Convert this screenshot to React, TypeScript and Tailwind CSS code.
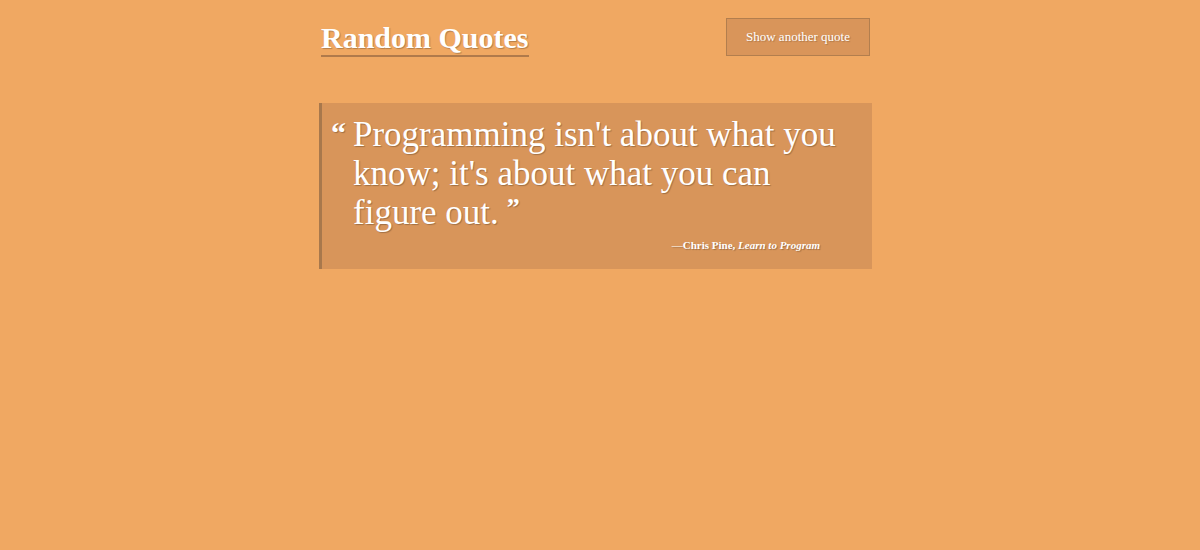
import { useState } from "react";

const QUOTES = [
  {
    text: "Programming isn't about what you know; it's about what you can figure out.",
    author: "Chris Pine",
    source: "Learn to Program",
  },
];

function App() {
  const [index, setIndex] = useState(0);
  const quote = QUOTES[index];

  return (
    <div className="min-h-[550px] w-full bg-[#f0a862] font-['Liberation_Serif',serif] text-white">
      <div className="ml-[319px] w-[553px] pt-[18px]">
        <header className="flex items-start justify-between">
          <h1 className="mt-[3px] ml-[2px] border-b-2 border-[#b07a4b] pb-[1px] text-[30px] font-bold leading-[33px] [text-shadow:1px_1px_1px_rgba(0,0,0,0.25)]">
            Random Quotes
          </h1>
          <button
            className="mr-[2px] h-[38px] w-[144px] border border-[#b27e4e] bg-[#d9955a] text-[13px] text-white [text-shadow:1px_1px_1px_rgba(0,0,0,0.2)]"
            onClick={() => setIndex((index + 1) % QUOTES.length)}
            type="button"
          >
            Show another quote
          </button>
        </header>

        <blockquote className="mt-[46px] flex h-[166px] flex-col border-l-[3px] border-[#a8784c] bg-[#d8955a] pt-[12px] pr-[20px] pl-[9px]">
          <div className="flex">
            <span className="w-[22px] shrink-0 pt-[3px] text-[30px] font-bold leading-[30px] [text-shadow:1px_1px_1px_rgba(0,0,0,0.25)]">
              “
            </span>
            <p className="max-w-[496px] text-[35px] leading-[39px] [text-shadow:1px_1px_1px_rgba(0,0,0,0.25)] after:ml-[8px] after:align-[8px] after:text-[26px] after:leading-none after:font-bold after:content-['”']">
              {quote.text}
            </p>
          </div>
          <p className="mt-[5px] pr-[32px] text-right text-[11px] font-bold [text-shadow:1px_1px_1px_rgba(0,0,0,0.25)]">
            —{quote.author}, <cite className="italic">{quote.source}</cite>
          </p>
        </blockquote>
      </div>
    </div>
  );
}

export default App;
